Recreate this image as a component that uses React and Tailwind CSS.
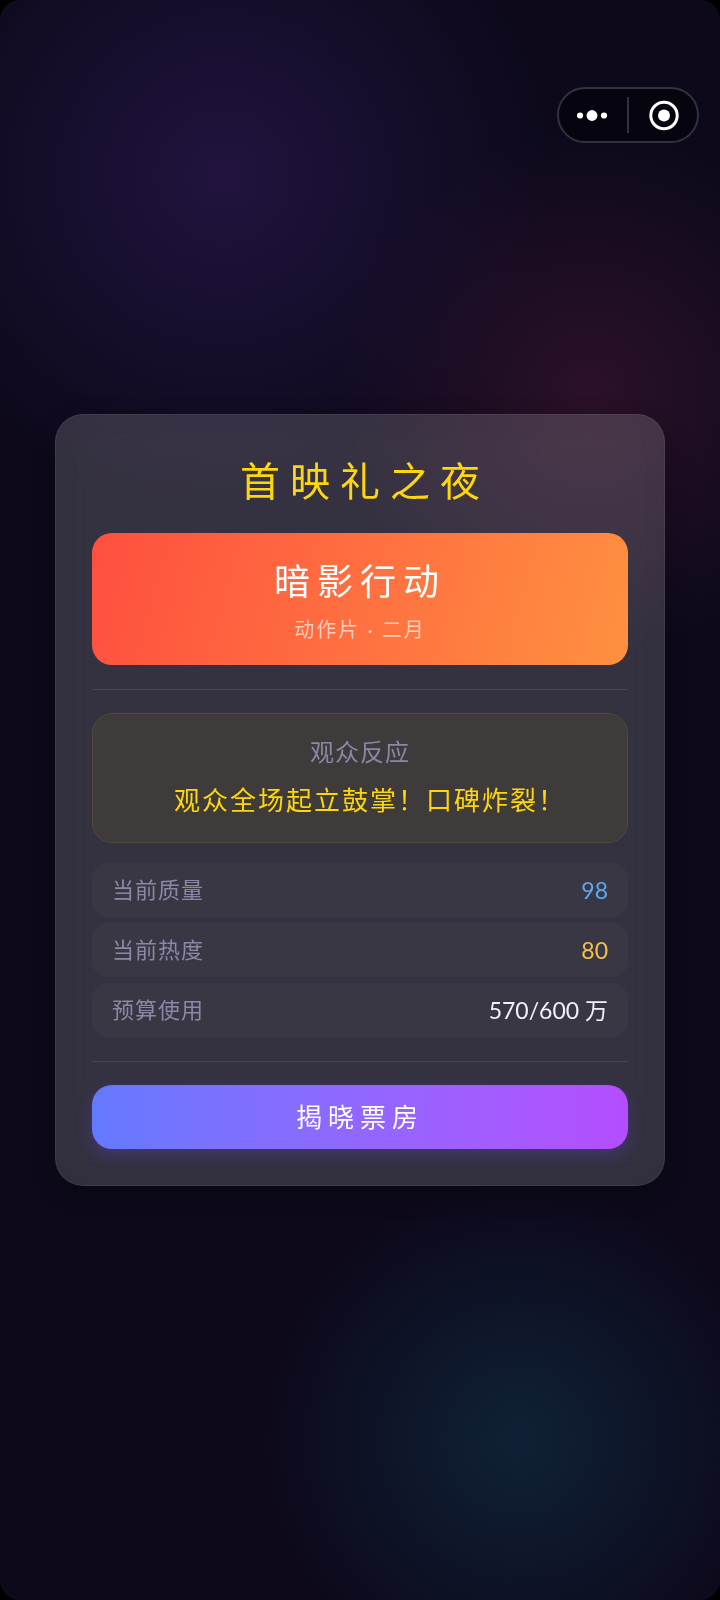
import { useState } from 'react'

const movie = {
  title: '暗影行动',
  genre: '动作片',
  month: '二月',
}

const stats = [
  { label: '当前质量', value: '98', color: 'text-[#5ba8f0]' },
  { label: '当前热度', value: '80', color: 'text-[#f5c048]' },
  { label: '预算使用', value: '570/600 万', color: 'text-[#f1effa]' },
]

// ── Mini-program capsule (menu + close) ───────────────────────────────────────
function Capsule() {
  return (
    <div className="absolute right-[21px] top-[87px] flex h-14 w-[142px] items-center rounded-full
      border-2 border-[#34313f] bg-[#06040f]">
      <button type="button" aria-label="更多" className="flex h-full flex-1 items-center justify-center">
        <svg className="h-8 w-8" viewBox="0 0 32 32" fill="#ffffff">
          <circle cx="3" cy="16.5" r="3.1" />
          <circle cx="15" cy="16.5" r="5.4" />
          <circle cx="27" cy="16.5" r="3.1" />
        </svg>
      </button>
      <span className="h-9 w-[2px] bg-[#34313f]" />
      <button type="button" aria-label="关闭" className="flex h-full flex-1 items-center justify-center">
        <svg className="h-8 w-8" viewBox="0 0 32 32" fill="none">
          <circle cx="17" cy="16.5" r="13.2" stroke="#ffffff" strokeWidth="3" />
          <circle cx="17" cy="16.5" r="6" fill="#ffffff" />
        </svg>
      </button>
    </div>
  )
}

function Divider() {
  return <hr className="mt-6 mb-[23px] border-0 border-t border-white/10" />
}

function StatRow({ label, value, color }) {
  return (
    <div className="flex h-[54px] items-center justify-between rounded-2xl bg-white/[0.03] px-5">
      <dt className="text-[22px] leading-8 tracking-[1px] text-[#8a88a6]">{label}</dt>
      <dd className={`text-[23px] leading-8 ${color}`}>{value}</dd>
    </div>
  )
}

export default function App() {
  const [revealed, setRevealed] = useState(false)

  return (
    <div className="min-h-screen bg-black font-['Lato','Noto_Sans_CJK_SC',sans-serif]">
      <main
        className="relative flex min-h-screen items-center justify-center rounded-[20px] bg-[#0d091b] px-[55px] py-8
          bg-[radial-gradient(circle_330px_at_31%_11%,#21133e,#21133e00),radial-gradient(circle_260px_at_82%_24.5%,#2b1129,#2b112900),radial-gradient(circle_255px_at_72%_90%,#0f2136,#0f213600)]"
      >
        <Capsule />

        <section
          className="w-full max-w-[760px] rounded-[28px] border border-white/5 bg-white/[0.165] p-9 text-center
            shadow-[0_8px_24px_rgba(0,0,0,0.25),inset_0_0_28px_rgba(0,0,0,0.06)] backdrop-blur-lg"
        >
          <h1 className="mb-[22px] pl-[10px] text-[40px] leading-[60px] tracking-[10px] text-[#fdd60d]">
            首映礼之夜
          </h1>

          {/* Movie banner */}
          <div className="flex flex-col gap-3 rounded-[20px] bg-linear-[105deg] from-[#ff4f3f] to-[#ff9040] py-6 text-white">
            <h2 className="text-[36px] leading-[48px] tracking-[7px]">{movie.title}</h2>
            <p className="text-[20px] leading-6 tracking-[2px] text-white/65">
              {movie.genre} · {movie.month}
            </p>
          </div>

          <Divider />

          {/* Audience reaction */}
          <div className="flex flex-col gap-3 rounded-[20px] border border-[#504b38] bg-[#3f3b3a] py-[22px]">
            <h3 className="text-[24px] leading-8 tracking-[1px] text-[#8a88a6]">观众反应</h3>
            <p className="pl-5 text-[26px] leading-10 tracking-[2px] text-[#fdd60d]">
              观众全场起立鼓掌！口碑炸裂！
            </p>
          </div>

          <dl className="mt-5 flex flex-col gap-[6px]">
            {stats.map((s) => (
              <StatRow key={s.label} {...s} />
            ))}
          </dl>

          <Divider />

          <button
            type="button"
            aria-pressed={revealed}
            onClick={() => setRevealed(true)}
            className="h-16 w-full rounded-[20px] bg-linear-to-r from-[#6379ff] to-[#b44dff] text-[26px]
              leading-10 tracking-[6px] text-white shadow-[0_6px_16px_rgba(108,80,255,0.25)]"
          >
            揭晓票房
          </button>
        </section>
      </main>
    </div>
  )
}
